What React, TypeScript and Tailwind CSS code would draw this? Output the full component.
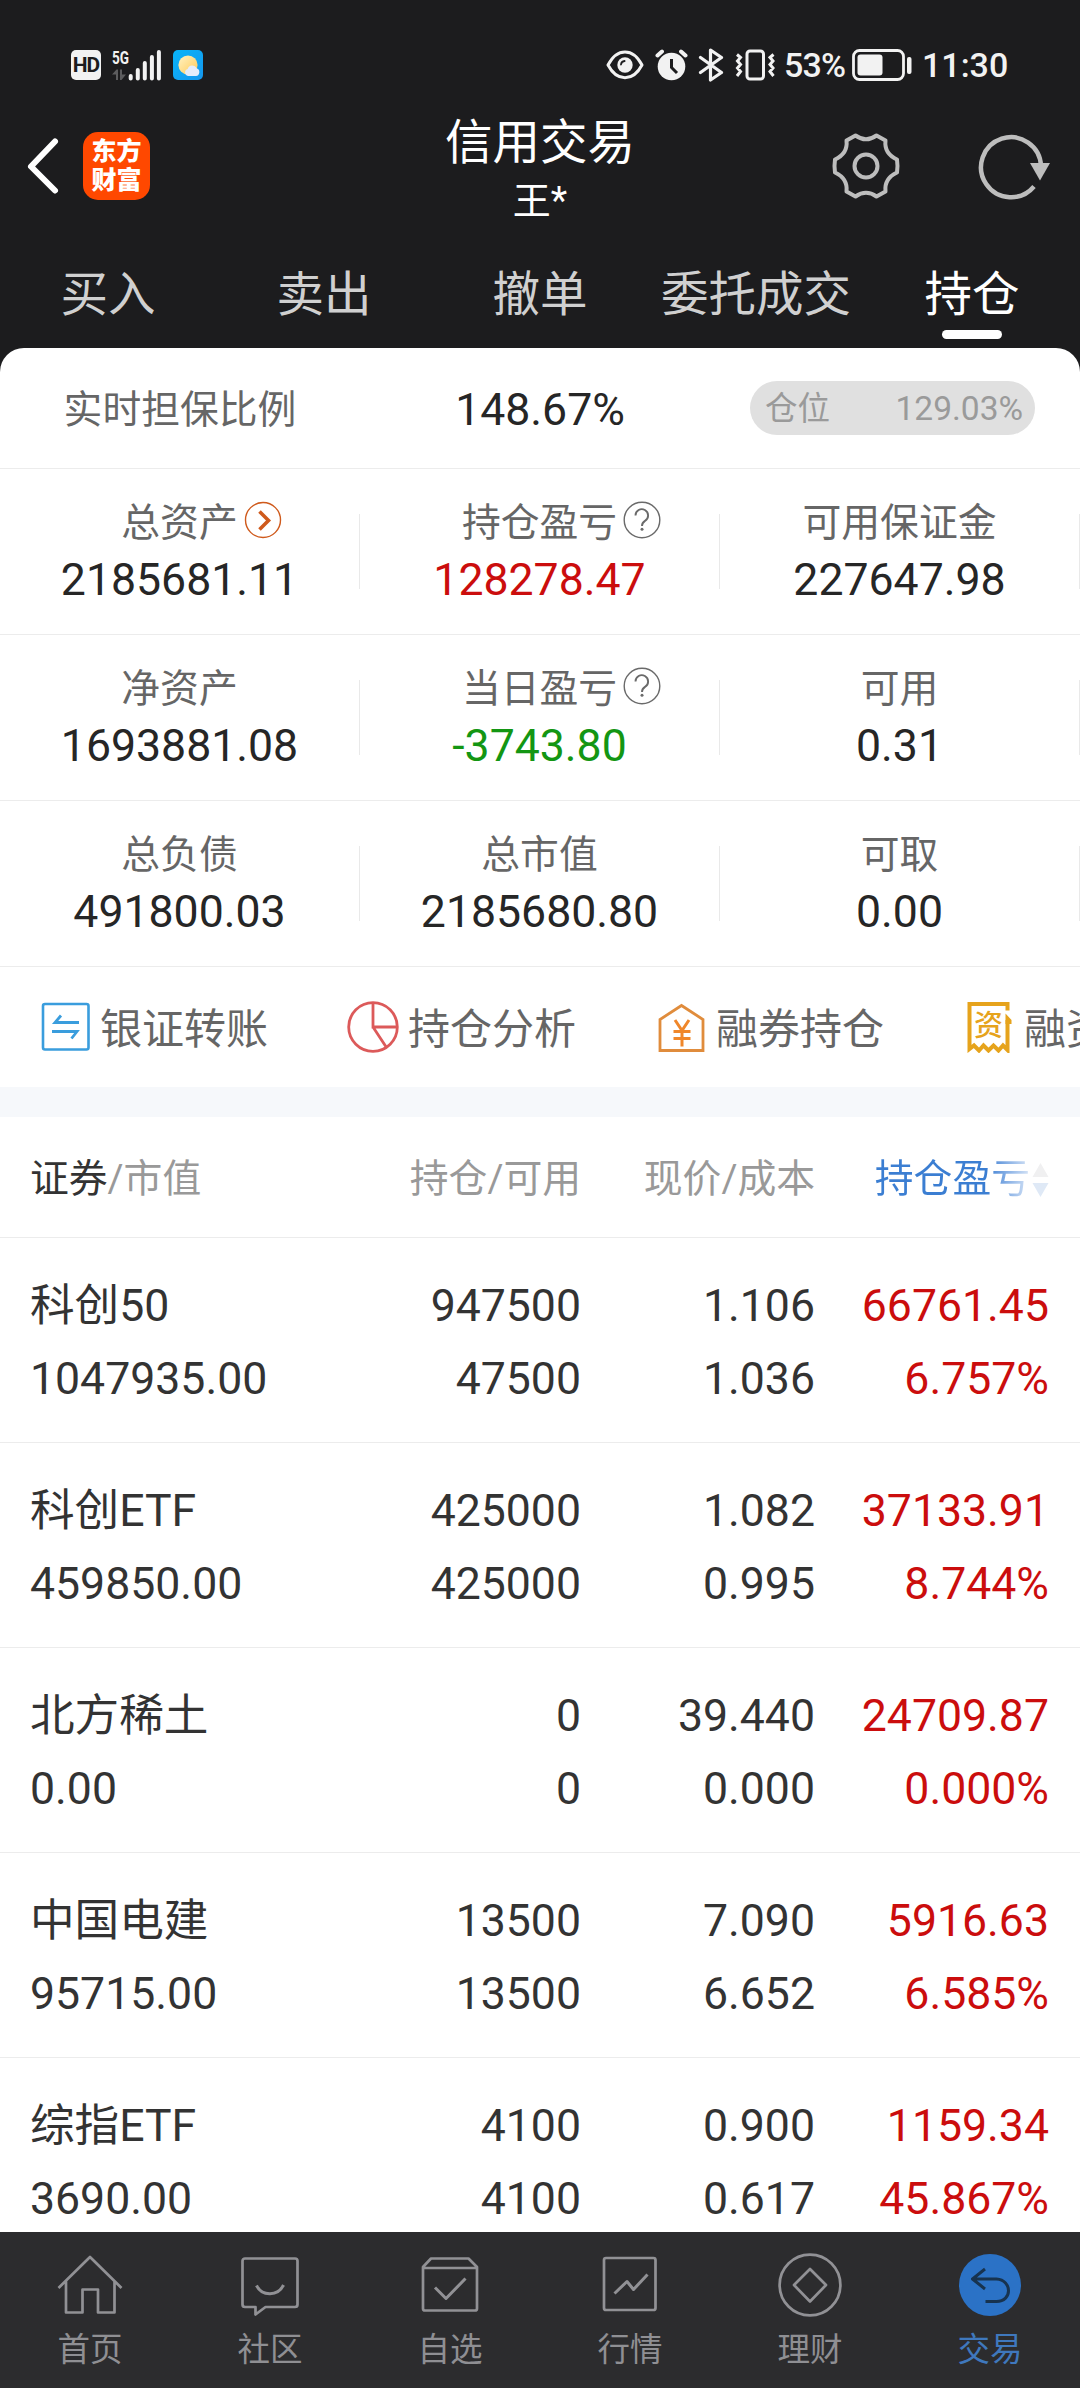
import type { ReactNode } from "react";

const TABS = ["买入", "卖出", "撤单", "委托成交", "持仓"];

type Cell = { label: string; value: string; color?: string; icon?: "arrow" | "help" };

const SUMMARY: Cell[][] = [
  [
    { label: "总资产", value: "2185681.11", icon: "arrow" },
    { label: "持仓盈亏", value: "128278.47", color: "text-[#cb0d0d]", icon: "help" },
    { label: "可用保证金", value: "227647.98" },
  ],
  [
    { label: "净资产", value: "1693881.08" },
    { label: "当日盈亏", value: "-3743.80", color: "text-[#139613]", icon: "help" },
    { label: "可用", value: "0.31" },
  ],
  [
    { label: "总负债", value: "491800.03" },
    { label: "总市值", value: "2185680.80" },
    { label: "可取", value: "0.00" },
  ],
];

const HOLDINGS = [
  { name: "科创50", marketValue: "1047935.00", held: "947500", usable: "47500", price: "1.106", cost: "1.036", profit: "66761.45", rate: "6.757%" },
  { name: "科创ETF", marketValue: "459850.00", held: "425000", usable: "425000", price: "1.082", cost: "0.995", profit: "37133.91", rate: "8.744%" },
  { name: "北方稀土", marketValue: "0.00", held: "0", usable: "0", price: "39.440", cost: "0.000", profit: "24709.87", rate: "0.000%" },
  { name: "中国电建", marketValue: "95715.00", held: "13500", usable: "13500", price: "7.090", cost: "6.652", profit: "5916.63", rate: "6.585%" },
  { name: "综指ETF", marketValue: "3690.00", held: "4100", usable: "4100", price: "0.900", cost: "0.617", profit: "1159.34", rate: "45.867%" },
];

function StatusBar() {
  return (
    <div className="flex h-[32px] items-center text-[#f2f2f2]">
      <div className="ml-[71px] flex h-[30px] w-[30px] items-center justify-center rounded-[5px] bg-[#f2f2f2] text-[21px] leading-none font-bold tracking-[-1px] text-[#1c1c1e]">
        HD
      </div>
      <svg className="ml-[10px] h-[32px] w-[52px] overflow-visible" viewBox="0 0 52 32">
        <text x="1" y="14.5" fill="#f2f2f2" fontSize="18" fontWeight="700" textLength="17" lengthAdjust="spacingAndGlyphs">
          5G
        </text>
        <path d="M1 25.500L5.500 20.500H7V31H5V25.500ZM9 20.500h2v5h4L10.500 31H9Z" fill="#5c5c5e" />
        <path d="M19.700 27v2.500M26.800 21v8.500M33.800 14v15.500M40.900 8v21.500M47.900 3v26.500" stroke="#f2f2f2" strokeWidth="4" strokeLinecap="round" />
      </svg>
      <svg className="ml-[10px] h-[30px] w-[30px]" viewBox="0 0 30 30">
        <defs>
          <linearGradient id="sky" x1="0" y1="0" x2="1" y2="1">
            <stop offset="0" stopColor="#08b4f8" />
            <stop offset="1" stopColor="#1596ee" />
          </linearGradient>
          <linearGradient id="sun" x1="0" y1="0" x2="1" y2="1">
            <stop offset="0" stopColor="#fff3c4" />
            <stop offset="1" stopColor="#ffc955" />
          </linearGradient>
        </defs>
        <rect width="30" height="30" rx="5" fill="url(#sky)" />
        <circle cx="15" cy="15" r="9.600" fill="url(#sun)" />
        <path d="M15 26a3.600 3.600 0 0 1-.3-7 4.800 4.800 0 0 1 9-.7 4 4 0 0 1-.7 7.700Z" fill="#e4ecfb" />
      </svg>

      <svg className="ml-auto h-[32px] w-[38px]" viewBox="0 0 38 32" fill="none" stroke="#f2f2f2" strokeWidth="3">
        <path d="M2 16C11-1.500 27-1.500 36 16C27 33 11 33 2 16Z" strokeLinejoin="round" />
        <circle cx="19" cy="16" r="7.700" fill="#f2f2f2" stroke="none" />
        <path d="M15 15.500a4 4 0 0 1 3.600-3.500" stroke="#1c1c1e" strokeWidth="1.800" strokeLinecap="round" />
      </svg>
      <svg className="ml-[11px] h-[32px] w-[33px]" viewBox="0 0 33 32">
        <circle cx="16.500" cy="17.500" r="13.800" fill="#f2f2f2" />
        <path d="M2.500 6.500L7 2.500M30.500 6.500L26 2.500" stroke="#f2f2f2" strokeWidth="4" strokeLinecap="round" />
        <path d="M16.500 10v8.500l5.500 5.500" fill="none" stroke="#1c1c1e" strokeWidth="3" />
      </svg>
      <svg className="ml-[10px] h-[34px] w-[26px]" viewBox="0 0 26 34" fill="none" stroke="#f2f2f2" strokeWidth="3.200" strokeLinecap="round" strokeLinejoin="round">
        <path d="M2.500 9.500L23.500 24.500L12.500 32V2L23.500 9.500L2.500 24.500" />
      </svg>
      <svg className="ml-[11px] h-[32px] w-[40px]" viewBox="0 0 40 32" fill="none" stroke="#f2f2f2" strokeWidth="3">
        <rect x="12" y="2" width="16.500" height="28" rx="3" />
        <path d="M2 5.500L5.500 8.500L2.500 12L5.500 15.500L2.500 19L5.500 22.500L2 27M38.500 5.500L35 8.500L38 12L35 15.500L38 19L35 22.500L38.500 27" strokeWidth="3" />
      </svg>
      <span className="ml-[9px] w-[62px] text-[34px] leading-[34px] font-medium tracking-[-0.8px]">53%</span>
      <svg className="ml-[6px] h-[32px] w-[60px]" viewBox="0 0 60 32">
        <rect x="1.500" y="1.500" width="50" height="29" rx="6" fill="none" stroke="#f2f2f2" strokeWidth="2.800" />
        <rect x="5.500" y="5.500" width="25" height="21" rx="3" fill="#f2f2f2" />
        <rect x="55" y="8" width="4.500" height="17" rx="2" fill="#f2f2f2" />
      </svg>
      <span className="mr-[74px] ml-[10px] w-[84px] text-[34px] leading-[34px] font-medium">11:30</span>
    </div>
  );
}

function TitleBar() {
  return (
    <div className="flex h-[118px] items-center">
      <div className="flex w-[360px] items-center">
        <svg className="ml-[25px] h-[58px] w-[36px]" viewBox="0 0 36 58" fill="none" stroke="#fff" strokeWidth="6" strokeLinecap="round" strokeLinejoin="round">
          <path d="M30 4.500L6 29.500L30 53.500" />
        </svg>
        <div className="ml-[22px] flex h-[68px] w-[67px] flex-col items-center justify-center rounded-[15px] bg-[#ff4800] text-[25px] leading-[29px] font-black text-white">
          <span>东方</span>
          <span>财富</span>
        </div>
      </div>
      <div className="flex w-[360px] flex-col items-center pt-[5px] text-white">
        <h1 className="text-[47.500px] leading-[60px]">信用交易</h1>
        <p className="mt-[4px] text-[38px] leading-[48px]">王*</p>
      </div>
      <div className="flex w-[360px] items-center">
        <svg className="ml-[111px] h-[70px] w-[70px]" viewBox="0 0 70 70" fill="none" stroke="#bdbdbd" strokeWidth="4" strokeLinejoin="round">
          <path d="M24.500 4.500Q35 12 45.500 4.500L54.500 9.500Q53 22.500 66 28.500Q67 35 66 41.500Q53 47.500 54.500 60.500L45.500 65.500Q35 58 24.500 65.500L15.500 60.500Q17 47.500 4 41.500Q3 35 4 28.500Q17 22.500 15.500 9.500Z" />
          <circle cx="35" cy="35" r="11.500" />
        </svg>
        <svg className="ml-[76px] h-[70px] w-[76px]" viewBox="0 0 76 70">
          <path d="M57 55.500A30 30 0 1 1 64 35" fill="none" stroke="#bdbdbd" strokeWidth="4.500" />
          <path d="M53 32H73L63 49.500Z" fill="#bdbdbd" />
        </svg>
      </div>
    </div>
  );
}

function Tabs() {
  return (
    <div className="grid grid-cols-5 text-center text-[47.500px] leading-[60px] text-[#d0d0d0]">
      {TABS.map((tab) =>
        tab === "持仓" ? (
          <div key={tab} className="flex flex-col items-center text-white">
            {tab}
            <span className="mt-[5px] h-[9px] w-[60px] rounded-full bg-white" />
          </div>
        ) : (
          <div key={tab}>{tab}</div>
        ),
      )}
    </div>
  );
}

function ArrowBadge() {
  return (
    <svg className="h-[38px] w-[38px]" viewBox="0 0 38 38" fill="none" stroke="#cf5a1c">
      <circle cx="19" cy="19" r="17.500" strokeWidth="1.400" />
      <path d="M15.500 10.500L24.500 19.500L15.500 28.500" strokeWidth="3.600" />
    </svg>
  );
}

function HelpBadge() {
  return (
    <svg className="h-[38px] w-[38px]" viewBox="0 0 38 38" fill="none" stroke="#6a6a6a">
      <circle cx="19" cy="19" r="17.800" strokeWidth="1.400" />
      <path d="M12.500 14.500a6.300 6.300 0 1 1 9.500 5.400c-2 1.300-3 2.400-3 5" strokeWidth="1.900" />
      <circle cx="19" cy="28.300" r="1.500" fill="#6a6a6a" stroke="none" />
    </svg>
  );
}

function SummaryCell({ cell }: { cell: Cell }) {
  return (
    <div className="flex h-[165px] items-center">
      <div className="flex h-full w-[359px] flex-col items-center pt-[34px]">
        <div className="relative text-[38.800px] leading-[40px] text-[#666]">
          {cell.label}
          {cell.icon && (
            <span className="absolute top-[-2px] left-full ml-[6px]">
              {cell.icon === "arrow" ? <ArrowBadge /> : <HelpBadge />}
            </span>
          )}
        </div>
        <div className={`mt-[10px] text-[44.600px] leading-[54px] ${cell.color ?? "text-[#262626]"}`}>{cell.value}</div>
      </div>
      <div className="h-[75px] w-px bg-[#e9e9e9]" />
    </div>
  );
}

const ACTIONS: { label: string; icon: ReactNode }[] = [
  {
    label: "银证转账",
    icon: (
      <g fill="none" stroke="#3a9ddd">
        <rect x="4" y="3" width="45.500" height="45.500" rx="2" strokeWidth="2.600" />
        <path d="M40 21.500H16L22 14.500M13 30.500H38L32.500 37.500" strokeWidth="2.800" />
      </g>
    ),
  },
  {
    label: "持仓分析",
    icon: (
      <g fill="none" stroke="#dc5a5a" strokeWidth="2.800">
        <circle cx="26" cy="26" r="24.300" />
        <path d="M26 2V26H50M26 26L39.500 46.500" />
      </g>
    ),
  },
  {
    label: "融券持仓",
    icon: (
      <g fill="none" stroke="#e08c3c">
        <path d="M5 49.500V18.500L26.500 4.500L48 18.500V49.500Z" strokeWidth="2.800" />
        <path d="M20 19L27 29.500L34 19M18.500 30.500H35.500M18.500 37.500H35.500M27 29.500V45.500" stroke="#f0872a" strokeWidth="3" />
      </g>
    ),
  },
  {
    label: "融资负债",
    icon: (
      <g>
        <path d="M44.500 9.500V3H6.500V48L11 44.500L16 49.500L20.500 44.500L25.500 49.500L30.500 44.500L35.500 49.500L40 44.500L44.500 49V19" fill="none" stroke="#e6a31c" strokeWidth="4" />
        <path d="M42.500 12.500L48.500 19V23H42.500Z" fill="#e6a31c" />
        <text x="11" y="35" fill="#e6a31c" fontSize="29" fontWeight="500">
          资
        </text>
      </g>
    ),
  },
];

function NavIcon({ label }: { label: string }) {
  return (
    <svg className="h-[66px] w-[66px]" viewBox="0 0 66 66" fill="none" stroke="#919195" strokeWidth="2.700" strokeLinejoin="round">
      {label === "首页" && <path d="M1.500 36L33 5L64.500 36M9 29.500V60.500H25.500V37.500H41V60.500H57.500V29.500" />}
      {label === "社区" && (
        <>
          <path d="M8 6.500H58a2.500 2.500 0 0 1 2.500 2.500V52.500a2.500 2.500 0 0 1-2.500 2.500H28.500L18.500 62.500V55H8a2.500 2.500 0 0 1-2.500-2.500V9A2.500 2.500 0 0 1 8 6.500Z" />
          <path d="M19.500 33.500C25 44.500 41 44.500 46.500 33" strokeWidth="3" />
        </>
      )}
      {label === "自选" && (
        <>
          <path d="M6 15L14 6.500H51.500L60 15V56.500a2 2 0 0 1-2 2H8a2 2 0 0 1-2-2ZM6 16H60" />
          <path d="M18 35.500L29 46.500L48.500 26.500" strokeWidth="3" />
        </>
      )}
      {label === "行情" && (
        <>
          <rect x="7" y="6" width="51.500" height="52" rx="2" />
          <path d="M17.500 41.500L30 29.500L36.500 37.500L50.500 22.500" strokeWidth="3" />
        </>
      )}
      {label === "理财" && (
        <>
          <circle cx="33" cy="33" r="30.400" />
          <path d="M33 17L49 33L33 49.500L17 33Z" />
        </>
      )}
      {label === "交易" && (
        <>
          <circle cx="33" cy="33" r="31" fill="#2b72c6" stroke="none" />
          <path d="M28 17L15.500 27L28 37M15.500 27H39.500C55.500 28 55.500 49.500 39.500 49.500H28.500" stroke="#17334f" strokeWidth="3" />
        </>
      )}
    </svg>
  );
}

export default function App() {
  return (
    <div className="flex h-[2388px] w-[1080px] flex-col overflow-hidden bg-[#1c1c1e] font-[Roboto,'Noto_Sans_CJK_SC',sans-serif]">
      <header className="h-[348px] shrink-0 pt-[49px]">
        <StatusBar />
        <div className="pt-[26px]">
          <TitleBar />
        </div>
        <div className="pt-[40px]">
          <Tabs />
        </div>
      </header>

      <main className="min-h-0 flex-1 overflow-hidden rounded-t-[24px] bg-white">
        <section className="grid h-[121px] grid-cols-3 items-center border-b border-[#ececec] text-center">
          <div className="pt-[4px] text-[38.800px] text-[#666]">实时担保比例</div>
          <div className="pt-[4px] text-[44.600px] text-[#262626]">148.67%</div>
          <div className="ml-[30px] flex h-[54px] w-[285px] items-center justify-between rounded-full bg-[#e0e0e0] pt-[2px] pr-[12px] pl-[15px] text-[#9a9a9a]">
            <span className="text-[32.500px]">仓位</span>
            <span className="text-[33.500px]">129.03%</span>
          </div>
        </section>

        {SUMMARY.map((row) => (
          <section key={row[0].label} className="grid grid-cols-3 border-b border-[#ececec]">
            {row.map((cell) => (
              <SummaryCell key={cell.label} cell={cell} />
            ))}
          </section>
        ))}

        <section className="flex h-[120px] overflow-hidden pl-[39px]">
          {ACTIONS.map((action) => (
            <div key={action.label} className="flex w-[308px] shrink-0 items-center gap-[9px] text-[42px] whitespace-nowrap text-[#666]">
              <svg className="h-[52px] w-[52px] shrink-0" viewBox="0 0 52 52">
                {action.icon}
              </svg>
              <span className="pt-[4px]">{action.label}</span>
            </div>
          ))}
        </section>
        <div className="h-[30px] bg-[#f6f8fb]" />

        <section className="grid h-[121px] grid-cols-[348px_203px_234px_234px] items-center border-b border-[#ececec] px-[30px] pt-[5px] text-right text-[38.800px] text-[#999]">
          <div className="text-left">
            <span className="text-[#333]">证券</span>/市值
          </div>
          <div>持仓/可用</div>
          <div>现价/成本</div>
          <div className="flex items-center justify-end">
            <span className="bg-linear-to-r from-[#3b7ed2] from-72% to-[#d8e5f6] bg-clip-text text-transparent">持仓盈亏</span>
            <svg className="ml-[2px] h-[34px] w-[17px]" viewBox="0 0 17 34">
              <path d="M8.500 0L16.500 14H.5Z" fill="#f0f0f1" />
              <path d="M8.500 34L16.500 20H.5Z" fill="#dfe9f6" />
            </svg>
          </div>
        </section>

        {HOLDINGS.map((item) => (
          <section
            key={item.name}
            className="grid h-[205px] grid-cols-[348px_203px_234px_234px] border-b border-[#ececec] px-[30px] pt-[32px] text-right text-[44.600px] leading-[73px] text-[#333]"
          >
            <div className="text-left">
              <div>{item.name}</div>
              <div>{item.marketValue}</div>
            </div>
            <div>
              <div>{item.held}</div>
              <div>{item.usable}</div>
            </div>
            <div>
              <div>{item.price}</div>
              <div>{item.cost}</div>
            </div>
            <div className="text-[#cb0d0d]">
              <div>{item.profit}</div>
              <div>{item.rate}</div>
            </div>
          </section>
        ))}
      </main>

      <nav className="grid h-[156px] shrink-0 grid-cols-6 bg-[#2c2c2e] pt-[20px]">
        {["首页", "社区", "自选", "行情", "理财", "交易"].map((label) => (
          <div key={label} className="flex flex-col items-center">
            <NavIcon label={label} />
            <span className={`mt-[12px] text-[32.500px] leading-[40px] ${label === "交易" ? "text-[#3f78bd]" : "text-[#8f8f93]"}`}>
              {label}
            </span>
          </div>
        ))}
      </nav>
    </div>
  );
}
